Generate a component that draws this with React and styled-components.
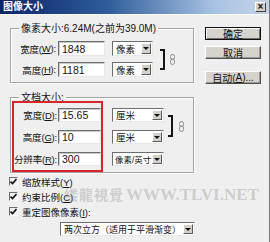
import React from 'react';
import styled, { createGlobalStyle } from 'styled-components';

const GlobalStyle = createGlobalStyle`
  * {
    box-sizing: border-box;
  }
  body {
    margin: 0;
    background: #efefef;
    font-family: 'Liberation Sans', 'Noto Sans CJK SC', sans-serif;
  }
`;

const Window = styled.div`
  position: relative;
  width: 270px;
  height: 242px;
  overflow: hidden;
  background: #efefef;
  border-right: 1px solid #7a7a7a;
  font-size: 10px;
  color: #111;
`;

const TitleBar = styled.div`
  height: 15px;
  display: flex;
  align-items: center;
  justify-content: space-between;
  padding: 0 3px 0 3px;
  background: linear-gradient(to right, #0a246a 0%, #2f5d9a 40%, #a9c3e4 80%, #c4d3e6 100%);
  border-bottom: 1px solid #fbfbfb;
`;

const Title = styled.span`
  color: #fff;
  font-weight: bold;
  font-size: 10px;
  line-height: 14px;
`;

const CloseBtn = styled.div`
  width: 11px;
  height: 10px;
  display: flex;
  align-items: center;
  justify-content: center;
  background: #d4d0c8;
  border: 1px solid;
  border-color: #fff #404040 #404040 #fff;
  font-size: 10px;
  font-weight: bold;
  line-height: 1;
`;

const Body = styled.div`
  display: flex;
  padding-left: 10px;
`;

const Main = styled.div`
  width: 184px;
  padding-top: 13px;
`;

const Side = styled.div`
  display: flex;
  flex-direction: column;
  margin-left: 11px;
  padding-top: 12px;
`;

const Button = styled.div`
  width: 56px;
  height: 13px;
  margin-bottom: ${p => p.$gap}px;
  display: flex;
  align-items: center;
  justify-content: center;
  background: #d6d3cd;
  border: 1px solid;
  border-color: ${p => (p.$default ? '#111' : '#fff #505050 #505050 #fff')};
  box-shadow: ${p =>
    p.$default ? 'inset 1px 1px 0 #fff, inset -1px -1px 0 #707070' : 'inset -1px -1px 0 #9a9a9a'};
  font-size: 10px;
`;

const Group = styled.div`
  position: relative;
  margin-top: ${p => p.$top}px;
  padding: ${p => p.$pad};
  border: 1px solid #a2a2a2;
  box-shadow: 1px 1px 0 #fff, inset 1px 1px 0 #fff;
`;

const Legend = styled.span`
  position: absolute;
  top: -7px;
  left: 8px;
  padding: 0 2px;
  background: #efefef;
  line-height: 13px;
  font-size: 10px;
`;

const Fields = styled.div`
  display: grid;
  grid-template-columns: ${p => `${p.$label}px ${p.$input}px ${p.$select}px auto`};
  grid-auto-rows: ${p => p.$row}px;
  row-gap: ${p => p.$gap}px;
  align-items: stretch;
`;

const Label = styled.div`
  display: flex;
  align-items: center;
  justify-content: flex-end;
  padding-right: ${p => p.$pr}px;
  white-space: nowrap;
  font-size: 9.5px;
  letter-spacing: -0.2px;
`;

const U = styled.span`
  text-decoration: underline;
`;

const Field = styled.div`
  display: flex;
  align-items: center;
  padding-left: 3px;
  background: #fff;
  border: 1px solid;
  border-color: #6e6e6e #e8e8e8 #e8e8e8 #6e6e6e;
  box-shadow: inset 1px 1px 0 #c8c8c8;
  font-size: 10.5px;
`;

const Select = styled.div`
  display: flex;
  align-items: center;
  margin-left: ${p => p.$ml || 0}px;
  padding: 1px 1px 1px ${p => p.$pl || 3}px;
  background: #fff;
  border: 1px solid;
  border-color: #6e6e6e #e8e8e8 #e8e8e8 #6e6e6e;
  font-size: ${p => p.$fs || 9.5}px;
`;

const SelectText = styled.span`
  flex: 1;
  min-width: 0;
  overflow: hidden;
  white-space: nowrap;
`;

const DropBtn = styled.span`
  flex: none;
  width: 10px;
  height: 100%;
  display: flex;
  align-items: center;
  justify-content: center;
  background: #d4d0c8;
  border: 1px solid;
  border-color: #fff #5a5a5a #5a5a5a #fff;

  &::after {
    content: '';
    border-left: 3px solid transparent;
    border-right: 3px solid transparent;
    border-top: 3px solid #111;
  }
`;

const LinkCol = styled.div`
  grid-row: 1 / span 2;
  grid-column: 4;
  display: flex;
  align-items: center;
  padding: ${p => p.$row / 2}px 0;
  margin-left: ${p => p.$ml}px;
`;

const Bracket = styled.div`
  width: 5px;
  height: 100%;
  border: 2px solid #151515;
  border-left: none;
`;

const Chain = styled.svg`
  margin-left: ${p => p.$ml}px;
`;

const RedBox = styled.div`
  position: absolute;
  left: 1px;
  top: 3px;
  width: 91px;
  height: 71px;
  border: 2px solid #d5262b;
`;

const Checks = styled.div`
  margin-top: 1px;
  margin-left: -1px;
`;

const CheckRow = styled.div`
  display: flex;
  align-items: center;
  height: 15px;
  gap: 4px;
  font-size: 9.5px;
`;

const Box = styled.span`
  width: 9px;
  height: 9px;
  display: flex;
  align-items: center;
  justify-content: center;
  border-top: 1px solid #6e6e6e;
  border-left: 1px solid #6e6e6e;
  border-right: 1px solid #fff;
  border-bottom: 1px solid #fff;
`;

const Resample = styled(Select)`
  width: 135px;
  height: 14px;
  margin-top: 3px;
  margin-left: 50px;
  font-size: 9px;
`;

const Watermark = styled.div`
  position: absolute;
  left: 64px;
  top: 184px;
  display: flex;
  align-items: baseline;
  gap: 2px;
  color: rgba(120, 120, 120, 0.3);
  font-weight: bold;
  pointer-events: none;
  white-space: nowrap;
`;

const WmCn = styled.span`
  font-family: 'Noto Sans CJK TC', sans-serif;
  font-size: 14px;
  letter-spacing: 1px;
`;

const WmEn = styled.span`
  font-family: 'Liberation Serif', serif;
  font-size: 17px;
`;

const ChainIcon = ({ ml }) => (
  <Chain $ml={ml} width="5" height="11" viewBox="0 0 5 11">
    <rect x="0.5" y="0.5" width="4" height="5" rx="2" fill="none" stroke="#8a8a8a" />
    <rect x="0.5" y="5" width="4" height="5.5" rx="2" fill="none" stroke="#8a8a8a" />
  </Chain>
);

const Check = ({ children }) => (
  <CheckRow>
    <Box>
      <svg width="7" height="7" viewBox="0 0 7 7">
        <path d="M0.5 3.5 L2.5 5.5 L6.5 1" fill="none" stroke="#111" strokeWidth="1.6" />
      </svg>
    </Box>
    <span>{children}</span>
  </CheckRow>
);

const Drop = ({ children, ml, fs, pl }) => (
  <Select $ml={ml} $fs={fs} $pl={pl}>
    <SelectText>{children}</SelectText>
    <DropBtn />
  </Select>
);

export default function App() {
  return (
    <Window>
      <GlobalStyle />
      <TitleBar>
        <Title>图像大小</Title>
        <CloseBtn>×</CloseBtn>
      </TitleBar>
      <Body>
        <Main>
          <Group $top={0} $pad="12px 0 5px 0">
            <Legend>像素大小:6.24M(之前为39.0M)</Legend>
            <Fields $label={47} $input={47} $select={48} $row={15} $gap={6}>
              <Label $pr={2}>宽度(<U>W</U>):</Label>
              <Field>1848</Field>
              <Drop ml={7}>像素</Drop>
              <LinkCol $row={15} $ml={7}>
                <Bracket />
                <ChainIcon ml={5} />
              </LinkCol>
              <Label $pr={2}>高度(<U>H</U>):</Label>
              <Field>1181</Field>
              <Drop ml={7}>像素</Drop>
            </Fields>
          </Group>

          <Group $top={14} $pad="10px 0 6px 0">
            <Legend>文档大小:</Legend>
            <Fields $label={47} $input={43} $select={63} $row={14} $gap={8}>
              <Label $pr={1}>宽度(<U>D</U>):</Label>
              <Field>15.65</Field>
              <Drop ml={11}>厘米</Drop>
              <LinkCol $row={14} $ml={4}>
                <Bracket />
                <ChainIcon ml={6} />
              </LinkCol>
              <Label $pr={1}>高度(<U>G</U>):</Label>
              <Field>10</Field>
              <Drop ml={11}>厘米</Drop>
              <Label $pr={1}>分辨率(<U>R</U>):</Label>
              <Field>300</Field>
              <Drop ml={11} fs={8.5} pl={2}>像素/英寸</Drop>
            </Fields>
            <RedBox />
          </Group>

          <Checks>
            <Check>缩放样式(<U>Y</U>)</Check>
            <Check>约束比例(<U>C</U>)</Check>
            <Check>重定图像像素(<U>I</U>):</Check>
          </Checks>

          <Resample>
            <SelectText>两次立方（适用于平滑渐变）</SelectText>
            <DropBtn />
          </Resample>
        </Main>

        <Side>
          <Button $default $gap={6}>确定</Button>
          <Button $gap={12}>取消</Button>
          <Button $gap={0}>自动(<U>A</U>)...</Button>
        </Side>
      </Body>
      <Watermark>
        <WmCn>缕龍視覺</WmCn>
        <WmEn>WWW.TLVI.NET</WmEn>
      </Watermark>
    </Window>
  );
}
